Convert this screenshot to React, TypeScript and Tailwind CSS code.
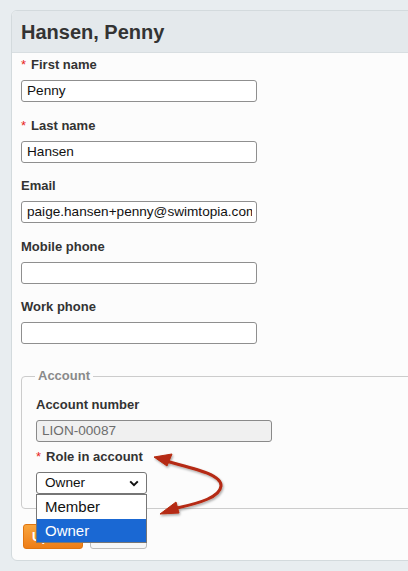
import React from "react";

function Label({ text, required }: { text: string; required?: boolean }) {
  return (
    <div className="h-[18px] leading-[18px] text-[13px] font-bold text-[#333] mb-[6px] whitespace-nowrap">
      {required && <span className="text-[#e8231b] font-normal mr-[5px]">*</span>}
      {text}
    </div>
  );
}

function Field({ value, disabled }: { value?: string; disabled?: boolean }) {
  return (
    <div
      className={
        "w-[236px] h-[22px] border rounded-[3px] pl-[5px] pr-[4px] " +
        (disabled ? "bg-[#f0f0f0] border-[#8a8a8a]" : "bg-white border-[#8f8f8f]")
      }
    >
      <div
        className={
          "h-full overflow-hidden whitespace-nowrap text-[13.6px] leading-[20px] " +
          (disabled ? "text-[#6d6d6d]" : "text-[#111]")
        }
      >
        {value}
      </div>
    </div>
  );
}

export default function App() {
  return (
    <div className="relative w-[408px] h-[571px] overflow-hidden bg-[#e8edf0] pt-[10px] pl-[11px] font-['Liberation_Sans',Arial,sans-serif]">
      <div className="w-[440px] border border-[#d3dadd] rounded-l-[6px] bg-[#fcfcfc] overflow-hidden">
        <div className="h-[42px] bg-[#e4e9ec] border-b border-[#d8dee1] flex items-center pl-[9px]">
          <h1 className="text-[20px] font-bold text-[#333] leading-none">Hansen, Penny</h1>
        </div>
        <div className="pt-[3px] pl-[9px] pb-[11px]">
          <Label text="First name" required />
          <div className="mb-[15px]">
            <Field value="Penny" />
          </div>
          <Label text="Last name" required />
          <div className="mb-[14px]">
            <Field value="Hansen" />
          </div>
          <Label text="Email" />
          <div className="mb-[15px]">
            <Field value="paige.hansen+penny@swimtopia.com" />
          </div>
          <Label text="Mobile phone" />
          <div className="mb-[14px]">
            <Field />
          </div>
          <Label text="Work phone" />
          <Field />

          <fieldset className="mt-[23px] w-[420px] border border-[#cccccc] rounded-[4px] pl-[13px] pt-[11px] pb-[14px]">
            <legend className="px-[3px] h-[18px] leading-[18px] text-[13px] font-bold text-[#8a8a8a]">
              Account
            </legend>
            <div className="pl-[1px]">
              <Label text="Account number" />
              <div className="mb-[6px]">
                <Field value="LION-00087" disabled />
              </div>
              <Label text="Role in account" required />
              <div className="relative w-[111px] h-[22px]">
                <div className="w-full h-full border border-[#767676] rounded-[3px] bg-white flex items-center justify-between pl-[8px] pr-[6px]">
                  <span className="text-[13.6px] text-[#111] leading-[20px]">Owner</span>
                  <svg width="10" height="7" viewBox="0 0 10 7" className="mr-[1px]">
                    <path d="M1.2 1.4 L5 5.2 L8.8 1.4" fill="none" stroke="#111" strokeWidth="2" />
                  </svg>
                </div>
                <div className="absolute left-0 top-[22px] w-[111px] border border-[#767676] bg-white z-10">
                  <div className="h-[24px] leading-[24px] pl-[8px] text-[15px] text-[#111]">Member</div>
                  <div className="h-[23px] leading-[23px] pl-[8px] text-[15px] text-white bg-[#1a68d3]">Owner</div>
                </div>
              </div>
            </div>
          </fieldset>

          <div className="mt-[15px] flex gap-[7px] pl-[2px]">
            <div className="w-[60px] h-[25px] rounded-[3px] border border-[#e07510] bg-gradient-to-b from-[#f9a53c] to-[#ee7d15] text-white text-[13px] font-bold leading-[23px] pl-[8px]">
              Update
            </div>
            <div className="w-[57px] h-[25px] rounded-[3px] border border-[#bdbdbd] bg-[#f7f7f7] text-[#333] text-[13px] leading-[23px] text-center">
              Cancel
            </div>
          </div>
        </div>
      </div>

      <svg
        className="absolute left-0 top-0 pointer-events-none"
        width="408"
        height="571"
        viewBox="0 0 408 571"
      >
        <defs>
          <filter id="sh" x="-20%" y="-20%" width="140%" height="140%">
            <feDropShadow dx="1" dy="1.5" stdDeviation="1.2" floodColor="#000" floodOpacity="0.35" />
          </filter>
        </defs>
        <g filter="url(#sh)" fill="#b52a12" stroke="#b52a12">
          <path
            d="M166 461 C196 469 222 475 221 486 C220 497 200 503 177 508"
            fill="none"
            strokeWidth="3"
            strokeLinecap="round"
          />
          <polygon points="154,457 172,454 167,466" strokeWidth="1" strokeLinejoin="round" />
          <polygon points="160,514 176,502 179,513" strokeWidth="1" strokeLinejoin="round" />
        </g>
      </svg>
    </div>
  );
}
